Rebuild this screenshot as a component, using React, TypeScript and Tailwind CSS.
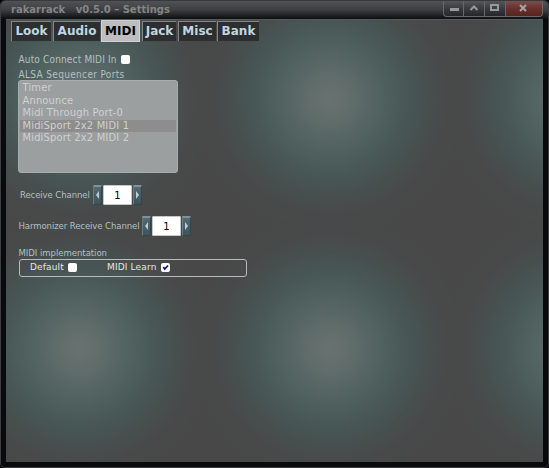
import React from "react";

const tabs = [
  { label: "Look", box: "w-[40px] mr-[2px]" },
  { label: "Audio", box: "w-[47px] mr-[1px]" },
  { label: "MIDI", box: "w-[39px] mr-[2px]" },
  { label: "Jack", box: "w-[34px] mr-[2px]" },
  { label: "Misc", box: "w-[38px] mr-[1px]" },
  { label: "Bank", box: "w-[42px]" },
];

const ports = [
  "Timer",
  "Announce",
  "Midi Through Port-0",
  "MidiSport 2x2 MIDI 1",
  "MidiSport 2x2 MIDI 2",
];

function TitleButtons() {
  return (
    <div className="flex h-[16px] w-[100px] overflow-hidden rounded-b-[4px] border border-t-0 border-[#66686b] bg-linear-to-b from-[#55575b] via-[#393b3e] via-50% to-[#242628]">
      <div className="w-[20px] border-r border-[#66686b]">
        <svg width="19" height="15" className="block">
          <rect x="6" y="7" width="9" height="3" fill="#98999b" />
        </svg>
      </div>
      <div className="w-[21px] border-r border-[#66686b]">
        <svg width="20" height="15" className="block">
          <path d="M6.5 9 L10 5.5 L13.5 9" fill="none" stroke="#98999b" strokeWidth="2" />
        </svg>
      </div>
      <div className="w-[21px] border-r border-[#66686b]">
        <svg width="20" height="15" className="block">
          <rect x="6" y="4" width="7" height="5" fill="none" stroke="#98999b" strokeWidth="2" />
        </svg>
      </div>
      <div className="flex-1 bg-linear-to-b from-[#76504d] via-[#6b302b] via-50% to-[#542620]">
        <svg width="36" height="15" className="block">
          <path d="M14 4 L20 10 M20 4 L14 10" stroke="#aaa3a2" strokeWidth="2" />
        </svg>
      </div>
    </div>
  );
}

function Arrow({ right }: { right?: boolean }) {
  return (
    <div className="h-[20px] w-[9px] rounded-[1px] border border-t-2 border-[#344449] border-t-[#7d9299] border-l-[#677b82] bg-linear-to-b from-[#536a73] to-[#3e535b]">
      <svg width="7" height="17" className="block">
        <path d={right ? "M2 4 L5 8 L2 12Z" : "M5 4 L2 8 L5 12Z"} fill="#b7d0d9" />
      </svg>
    </div>
  );
}

function Spinner() {
  return (
    <div className="flex">
      <Arrow />
      <div className="ml-px h-[20px] w-[29px] rounded-[1px] border border-[#c5c9c9] bg-white text-center font-['DejaVu_Sans'] text-[10px] leading-[19px] text-black">1</div>
      <div className="ml-[1px]">
        <Arrow right />
      </div>
    </div>
  );
}

function Check({ checked }: { checked?: boolean }) {
  return (
    <div className="h-[9px] w-[9px] shrink-0 rounded-[2px] bg-white">
      {checked && (
        <svg width="9" height="9" className="block">
          <path d="M2.3 4 L3.7 6 L7 2.5" fill="none" stroke="#1b1776" strokeWidth="1.8" />
        </svg>
      )}
    </div>
  );
}

export default function App() {
  return (
    <div className="h-[468px] w-[549px] overflow-hidden bg-black font-['DejaVu_Sans',sans-serif] whitespace-pre">
      <div className="flex h-[468px] flex-col rounded-[5px] border border-t-0 border-[#3d3e41] bg-[#090a0b]">
        <header className="flex h-[19px] shrink-0 justify-between rounded-t-[5px] border-t border-[#36383a] bg-linear-to-b from-[#505256] via-[#3c3e41] via-50% to-[#0e0f11] pr-[5px] pl-[10px]">
          <div className="text-[10px] leading-[18px] font-bold text-[#858585]">rakarrack   v0.5.0 – Settings</div>
          <TitleButtons />
        </header>
        <main className="mx-[5px] h-[443px] border-t border-[#565a5a] bg-[radial-gradient(circle,#687271_0px,#626e6c_18px,#556563_42px,#4c5d5b_62px,#475655_80px,#474f4e_98px,#484a4a_116px,#484848_135px)] bg-size-[250px_250px] bg-position-[-51px_-46px]">
          <nav className="flex h-[22px] pl-[5px]">
            {tabs.map((t) => (
              <div
                key={t.label}
                className={`${t.box} text-center text-[12px] font-bold ${
                  t.label === "MIDI"
                    ? "h-[22px] border border-[#d2d1d3] bg-[#bebdc0] leading-[20px] text-black"
                    : "mt-px h-[20px] border-t border-l border-[#858786] bg-[#2d2e2f] leading-[18px] text-[#c1d6df]"
                }`}
              >
                {t.label}
              </div>
            ))}
          </nav>
          <div className="ml-[12px] text-[#b0c1c3]">
            <div className="mt-[11px] flex h-[12px] items-center font-['DejaVu_Sans_Condensed'] text-[10px] tracking-[0.16px]">
              <span className="w-[103px] pl-[0.5px]">Auto Connect MIDI In</span>
              <Check />
            </div>
            <div className="mt-[3px] h-[12px] pl-[0.5px] font-['DejaVu_Sans_Condensed'] text-[10px] leading-[13px] tracking-[0.33px]">ALSA Sequencer Ports</div>
            <div className="h-[93px] w-[160px] rounded-[3px] border border-[#a8acad] bg-[#9b9fa0] pt-px font-['DejaVu_Sans_Condensed'] text-[11px] tracking-[0.18px] text-[#d0d1d1]">
              {ports.map((p, i) => (
                <div key={p} className={`mx-px h-[12.6px] pl-[2.5px] leading-[12px] ${i === 3 ? "bg-[#8d8d8d]" : ""}`}>
                  {p}
                </div>
              ))}
            </div>
            <div className="mt-[12px] flex h-[20px] items-center pl-[2px] font-['DejaVu_Sans_Condensed'] text-[9.5px] tracking-[-0.1px]">
              <span className="w-[73px] pt-px">Receive Channel</span>
              <Spinner />
            </div>
            <div className="mt-[11px] flex h-[20px] items-center font-['DejaVu_Sans_Condensed'] text-[9.5px] tracking-[-0.1px]">
              <span className="w-[124px] pt-px pl-[0.5px]">Harmonizer Receive Channel</span>
              <Spinner />
            </div>
            <div className="mt-[11px] h-[12px] pl-[0.5px] font-['DejaVu_Sans_Condensed'] text-[9.5px] leading-[11px] tracking-[-0.05px]">MIDI implementation</div>
            <div className="ml-px flex h-[18px] w-[228px] items-center rounded-[3px] border border-[#b9bbbb] pb-px pl-[10px] text-[9px] tracking-[0.15px] text-[#e4e7e7]">
              <span className="w-[38px] pt-px">Default</span>
              <Check />
              <span className="ml-[30px] w-[54px] pt-px">MIDI Learn</span>
              <Check checked />
            </div>
          </div>
        </main>
      </div>
    </div>
  );
}
